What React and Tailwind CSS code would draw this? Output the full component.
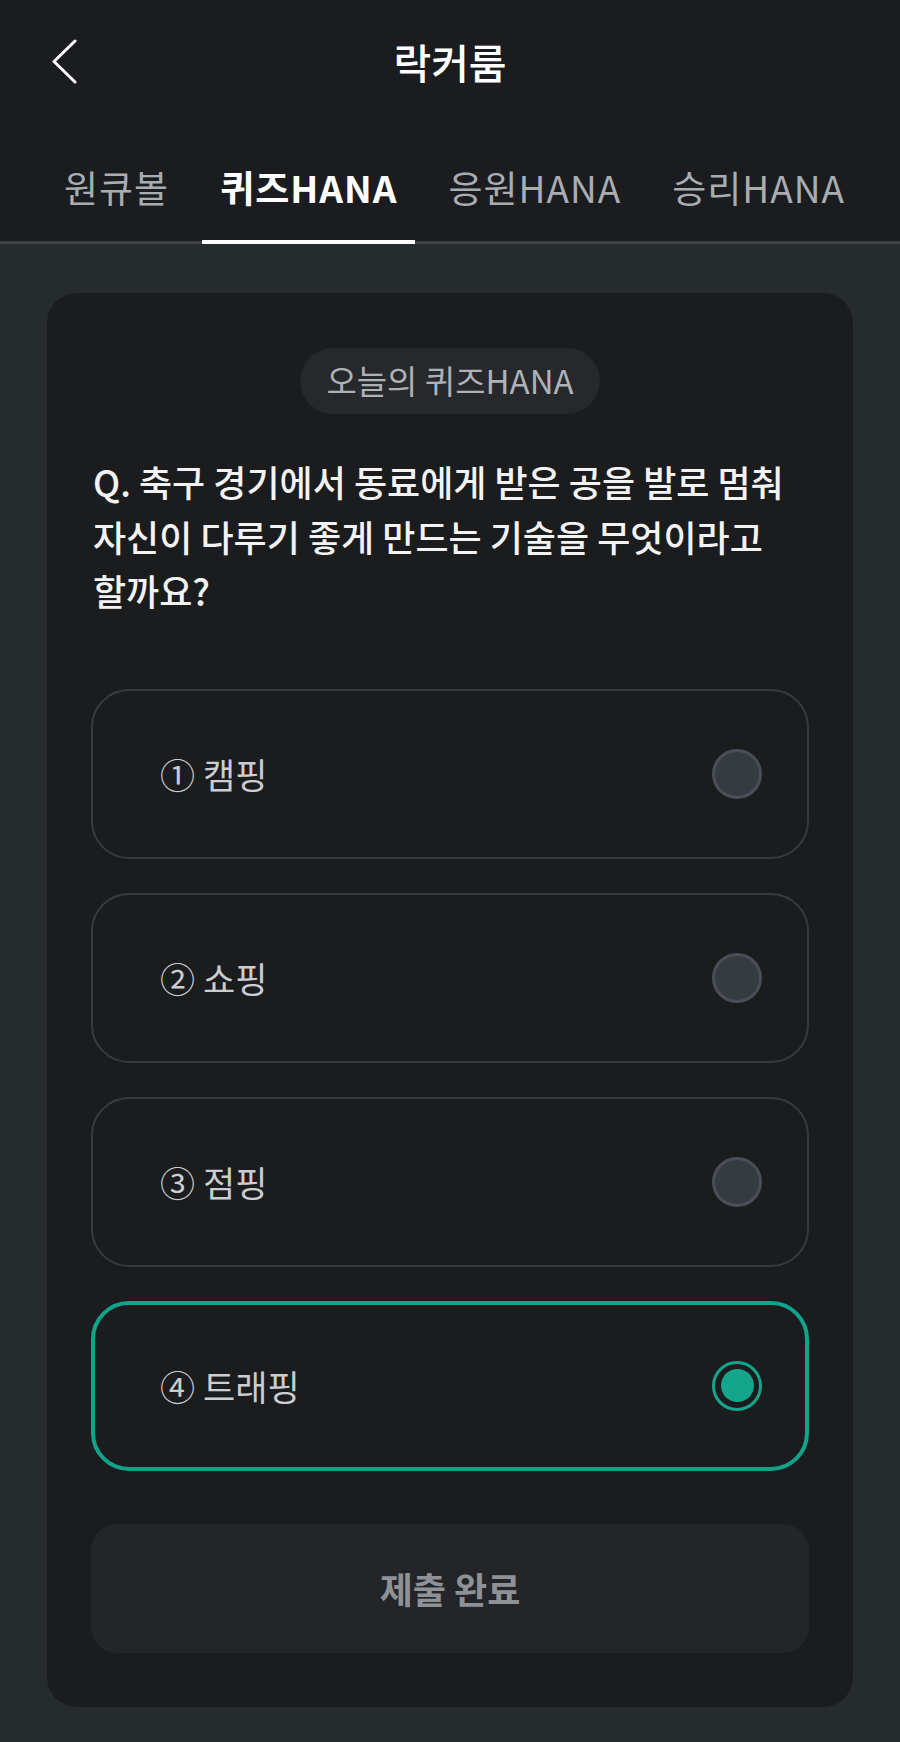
import { useState } from 'react';

const TABS = ['원큐볼', '퀴즈HANA', '응원HANA', '승리HANA'];

const OPTIONS = [
  { id: 1, mark: '①', label: '캠핑' },
  { id: 2, mark: '②', label: '쇼핑' },
  { id: 3, mark: '③', label: '점핑' },
  { id: 4, mark: '④', label: '트래핑' },
];

export default function App() {
  const [tab, setTab] = useState(1);
  const [picked, setPicked] = useState(4);

  return (
    <div className="min-h-[1742px] w-[900px] bg-[#262c2e] font-['Noto_Sans_CJK_KR','Noto_Sans',sans-serif]">
      <header className="bg-[#1b1c1f]">
        <div className="grid h-[128px] grid-cols-[1fr_auto_1fr] items-center pb-[6px]">
          <button className="ml-[48px] flex h-[48px] w-[32px] items-center justify-center" aria-label="back">
            <svg width="28" height="46" viewBox="0 0 28 46" fill="none">
              <path d="M25 3 L4 23.5 L25 44" stroke="#ffffff" strokeWidth="3" strokeLinecap="round" strokeLinejoin="round" />
            </svg>
          </button>
          <h1 className="text-[41px] font-medium leading-none text-white">락커룸</h1>
          <div />
        </div>

        <nav className="flex gap-[15px] border-b-[3px] border-[#3d4246] pl-[46px]">
          {TABS.map((t, i) => (
            <button
              key={t}
              onClick={() => setTab(i)}
              className={
                i === tab
                  ? '-mb-[3px] border-b-4 border-white px-[18px] pt-[35px] pb-[29px] text-[37px] font-bold leading-[48px] tracking-[1px] text-white'
                  : '-mb-[3px] border-b-4 border-transparent px-[18px] pt-[35px] pb-[29px] text-[37px] font-normal leading-[48px] tracking-[1px] text-[#a9acb1]'
              }
            >
              {t}
            </button>
          ))}
        </nav>
      </header>

      <main className="px-[47px] pt-[49px] pb-[35px]">
        <section className="rounded-[30px] bg-[#1b1c1e] px-[44px] pt-[55px] pb-[54px]">
          <div className="flex justify-center">
            <span className="flex h-[66px] items-center rounded-full bg-[#26282c] px-[26px] text-[33px] text-[#aeb1b6]">
              오늘의 퀴즈HANA
            </span>
          </div>

          <p className="mt-[40px] pl-[2px] text-[36px] font-medium leading-[54.5px] text-[#f3f3f3]">
            Q. 축구 경기에서 동료에게 받은 공을 발로 멈춰
            <br />
            자신이 다루기 좋게 만드는 기술을 무엇이라고
            <br />
            할까요?
          </p>

          <div className="mt-[71px] flex flex-col gap-[34px]">
            {OPTIONS.map((o) => {
              const on = o.id === picked;
              return (
                <button
                  key={o.id}
                  onClick={() => setPicked(o.id)}
                  className={
                    on
                      ? 'flex h-[170px] items-center justify-between rounded-[38px] border-[4px] border-[#13a38b] pl-[65px] pr-[43px]'
                      : 'flex h-[170px] items-center justify-between rounded-[38px] border-2 border-[#373a3f] pl-[67px] pr-[45px]'
                  }
                >
                  <span className="flex items-center gap-[8px] text-[35px] leading-none text-[#cbcdd0]">
                    <span>{o.mark}</span>
                    <span>{o.label}</span>
                  </span>
                  {on ? (
                    <span className="flex h-[50px] w-[50px] items-center justify-center rounded-full border-[3px] border-[#14a68d]">
                      <span className="h-[33px] w-[33px] rounded-full bg-[#14a68d]" />
                    </span>
                  ) : (
                    <span className="h-[50px] w-[50px] rounded-full border-[3px] border-[#4a4f57] bg-[#363a41]" />
                  )}
                </button>
              );
            })}
          </div>

          <button className="mt-[53px] flex h-[129px] w-full items-center justify-center rounded-[26px] bg-[#232528] text-[36px] font-bold text-[#8e9297]">
            제출 완료
          </button>
        </section>
      </main>
    </div>
  );
}
